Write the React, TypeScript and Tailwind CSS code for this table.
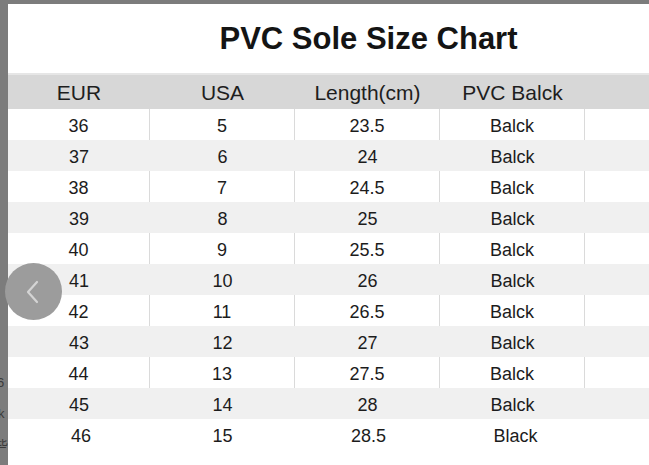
import React from "react";

const rows: [string, string, string, string][] = [
  ["36", "5", "23.5", "Balck"],
  ["37", "6", "24", "Balck"],
  ["38", "7", "24.5", "Balck"],
  ["39", "8", "25", "Balck"],
  ["40", "9", "25.5", "Balck"],
  ["41", "10", "26", "Balck"],
  ["42", "11", "26.5", "Balck"],
  ["43", "12", "27", "Balck"],
  ["44", "13", "27.5", "Balck"],
  ["45", "14", "28", "Balck"],
  ["46", "15", "28.5", "Black"],
];

export default function App() {
  return (
    <div className="relative w-[649px] h-[465px] overflow-hidden bg-[#7c7c7c] font-['Liberation_Sans',Arial,sans-serif] text-[#1c1c1c]">
      <div className="flex h-full pt-[4px] pl-[8px]">
        <div className="flex-1 bg-white overflow-hidden flex flex-col">
          <div className="h-[69px] flex items-start justify-center pl-[80px] pt-[17px] shrink-0">
            <div className="text-[31px] font-bold leading-[36px] text-[#141414] whitespace-nowrap">
              PVC Sole Size Chart
            </div>
          </div>
          <div className="h-[36px] shrink-0 flex items-center bg-[#d7d7d7] border-t-2 border-[#e6e6e6] text-[21px] leading-none text-[#1e1e1e]">
            <div className="w-[142px] text-center">EUR</div>
            <div className="w-[145px] text-center">USA</div>
            <div className="w-[145px] text-center">Length(cm)</div>
            <div className="w-[145px] text-center">PVC Balck</div>
            <div className="flex-1" />
          </div>
          {rows.map((r, i) => {
            const gray = i % 2 === 1;
            const last = i === rows.length - 1;
            const cell = gray || last
              ? "h-full flex items-center justify-center pt-[2px]"
              : "h-full flex items-center justify-center pt-[2px] border-r border-[#dadada]";
            return (
              <div
                key={r[0]}
                className={
                  "h-[31px] shrink-0 flex items-center text-[18px] leading-none " +
                  (gray ? "bg-[#f0f0f0]" : "bg-white")
                }
              >
                <div className={cell + " w-[142px]" + (last ? " pl-[4px]" : "")}>{r[0]}</div>
                <div className={cell + " w-[145px]"}>{r[1]}</div>
                <div className={cell + " w-[145px]" + (last ? " pl-[2px]" : "")}>{r[2]}</div>
                <div className={cell + " w-[145px]" + (last ? " pl-[6px]" : "")}>{r[3]}</div>
                <div className="flex-1" />
              </div>
            );
          })}
        </div>
      </div>

      <div className="absolute left-0 top-[376px] w-[8px] overflow-hidden text-[13px] leading-none text-[#3a3a3a] flex flex-col gap-[18px]">
        <span className="-ml-[3px]">6</span>
        <span className="-ml-[2px]">k</span>
        <span className="-ml-[5px] font-['Noto_Sans_CJK_SC',sans-serif]">些</span>
      </div>

      <div className="absolute left-[5px] top-[263px] w-[57px] h-[57px] rounded-full bg-[#9c9c9c] flex items-center justify-center">
        <svg width="16" height="24" viewBox="0 0 16 24" className="-ml-[1px]">
          <path d="M12 2 L3 12 L12 22" fill="none" stroke="#d4d4d4" strokeWidth="2.2" strokeLinecap="round" strokeLinejoin="round" />
        </svg>
      </div>
    </div>
  );
}
